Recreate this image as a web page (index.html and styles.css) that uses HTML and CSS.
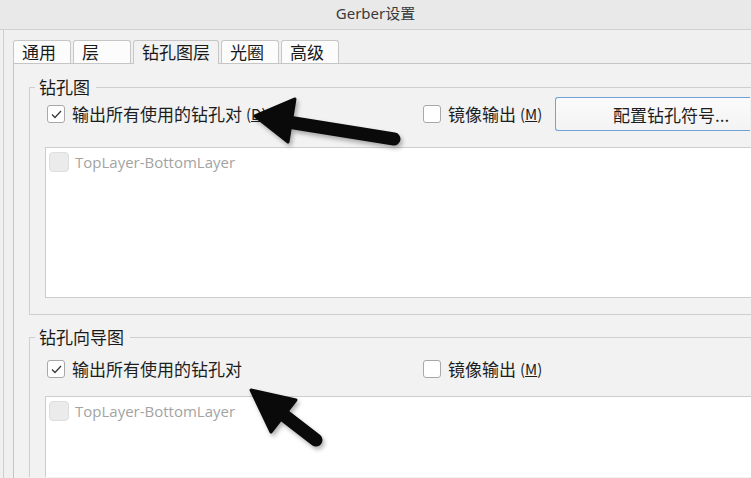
FILE: index.html
```html
<!DOCTYPE html>
<html lang="zh-CN">
<head>
<meta charset="utf-8">
<title>Gerber设置</title>
<link rel="stylesheet" href="styles.css">
</head>
<body>
<div class="titlebar">Gerber设置</div>
<div class="client">
  <div class="tabs">
    <div class="tab">通用</div>
    <div class="tab">层</div>
    <div class="tab active">钻孔图层</div>
    <div class="tab">光圈</div>
    <div class="tab">高级</div>
  </div>
  <div class="panel">
    <fieldset class="group g1">
      <legend>钻孔图</legend>
      <div class="inner">
        <div class="row">
          <label class="check main"><span class="box"><svg width="11" height="9" viewBox="0 0 11 9"><polyline points="1,4.5 4,7.5 10,1" fill="none" stroke="#3a3a3a" stroke-width="1.3"/></svg></span>输出所有使用的钻孔对 <span class="acc">(<u>D</u>)</span></label>
          <label class="check mirror"><span class="box"></span>镜像输出 <span class="acc">(<u>M</u>)</span></label>
          <button class="btn">配置钻孔符号...</button>
        </div>
        <div class="list">
          <div class="item"><span class="box dis"></span>TopLayer-BottomLayer</div>
        </div>
      </div>
    </fieldset>
    <fieldset class="group g2">
      <legend>钻孔向导图</legend>
      <div class="inner">
        <div class="row">
          <label class="check main"><span class="box"><svg width="11" height="9" viewBox="0 0 11 9"><polyline points="1,4.5 4,7.5 10,1" fill="none" stroke="#3a3a3a" stroke-width="1.3"/></svg></span>输出所有使用的钻孔对</label>
          <label class="check mirror"><span class="box"></span>镜像输出 <span class="acc">(<u>M</u>)</span></label>
        </div>
        <div class="list">
          <div class="item"><span class="box dis"></span>TopLayer-BottomLayer</div>
        </div>
      </div>
    </fieldset>
  </div>
</div>
<svg class="arrows" width="751" height="478" viewBox="0 0 751 478">
  <g fill="#0a0a0a" stroke="#0a0a0a" stroke-linecap="round" stroke-linejoin="round">
    <line x1="288" y1="122" x2="394" y2="139" stroke-width="13"/>
    <polygon points="255,116 295,99 288,142" stroke-width="3"/>
    <line x1="281" y1="413" x2="316" y2="440" stroke-width="13"/>
    <polygon points="251,390 296,400 271,432" stroke-width="3"/>
  </g>
</svg>
</body>
</html>
```
FILE: styles.css
```css
* { box-sizing: border-box; }
html, body { margin: 0; padding: 0; }
body {
  width: 751px;
  height: 478px;
  overflow: hidden;
  position: relative;
  background: #f0f0f0;
  font-family: "Noto Sans CJK SC", "Noto Sans", sans-serif;
  color: #1e1e1e;
}
.titlebar {
  height: 30px;
  background: #e9e9e9;
  border-bottom: 1px solid #d0d0d0;
  text-align: center;
  font: 15px/26px "Noto Sans", "Noto Sans CJK SC", sans-serif;
  color: #3a3a3a;
}
.client {
  margin-left: 3px;
  border-left: 1px solid #cfcfcf;
  padding: 10px 0 0 9px;
  height: 448px;
}
.tabs {
  display: flex;
  align-items: flex-end;
  height: 23px;
}
.tab {
  height: 23px;
  min-width: 58px;
  padding: 0 8px;
  margin-right: 2px;
  border: 1px solid #c6c6c6;
  border-bottom: none;
  border-radius: 3px 3px 0 0;
  background: #fcfcfc;
  font-size: 17px;
  line-height: 21px;
  color: #1a1a1a;
}
.tab.active {
  background: #f2f2f2;
  height: 24px;
  margin-bottom: -1px;
  position: relative;
  z-index: 1;
}
.panel {
  width: 738px;
  height: 415px;
  border-top: 1px solid #c6c6c6;
  border-left: 1px solid #c6c6c6;
  background: #f2f2f2;
  padding: 13px 0 0 15px;
}
.group {
  margin: 0;
  padding: 0 0 16px 0;
  width: 722px;
  border: 1px solid #cfcfcf;
  border-right: none;
  min-width: 0;
}
.group legend {
  margin-left: 5px;
  padding: 0 6px 0 4px;
  font-size: 17px;
  line-height: 20px;
  color: #1a1a1a;
}
.g2 {
  margin-top: 12px;
  padding-bottom: 0;
  border-bottom: none;
}
.inner { padding-left: 16px; }
.row {
  display: flex;
  align-items: center;
  height: 34px;
}
.g2 .row { margin-top: 5px; }
.check {
  display: flex;
  align-items: center;
  font-size: 17px;
  line-height: 20px;
  color: #1e1e1e;
  white-space: nowrap;
}
.check.main { width: 377px; padding-left: 1px; }
.check.mirror { width: 132px; }
.acc { font-size: 15px; margin-left: 4px; }
.box {
  width: 18px;
  height: 18px;
  flex: none;
  margin-right: 7px;
  border: 1px solid #a9a9a9;
  border-radius: 3px;
  background: #fff;
  display: inline-flex;
  align-items: center;
  justify-content: center;
}
.btn {
  width: 195px;
  height: 34px;
  border: 1px solid #6fa3d8;
  border-right: none;
  border-radius: 3px 0 0 3px;
  background: linear-gradient(#fbfbfb, #f3f3f3);
  font-family: "Noto Sans CJK SC", sans-serif;
  font-size: 17px;
  color: #1e1e1e;
  text-align: left;
  padding: 0 0 0 57px;
}
.list {
  margin-top: 16px;
  margin-left: -1px;
  height: 151px;
  background: #fff;
  border: 1px solid #cdcdcd;
  border-right: none;
  padding: 4px 0 0 3px;
}
.g2 .list {
  margin-top: 10px;
  height: 81px;
  border-bottom: none;
}
.item {
  display: flex;
  align-items: center;
  font-family: "Open Sans", "Noto Sans", sans-serif;
  font-size: 15px;
  color: #a3a3a3;
  height: 20px;
}
.box.dis {
  width: 20px;
  height: 20px;
  background: #ebebeb;
  border-color: #dedede;
  border-radius: 4px;
  margin-right: 6px;
}
.arrows {
  position: absolute;
  left: 0;
  top: 0;
  pointer-events: none;
  filter: drop-shadow(2px 3px 2px rgba(0,0,0,0.3));
}
```
